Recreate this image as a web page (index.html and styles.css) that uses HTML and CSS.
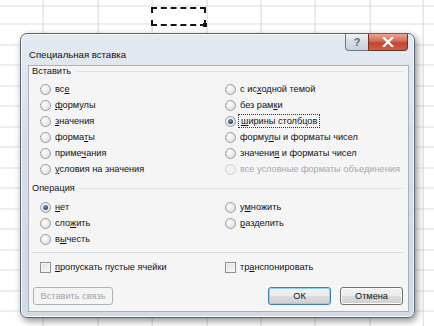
FILE: index.html
```html
<!DOCTYPE html>
<html lang="ru">
<head>
  <meta charset="UTF-8">
  <title>Специальная вставка</title>
  <link rel="stylesheet" href="styles.css">
</head>
<body>
  <div class="sheet">
    <div class="marquee"></div>

    <div class="dialog">
      <div class="titlebar">
        <span class="title">Специальная вставка</span>
        <div class="caption-btns">
          <span class="btn-help">?</span>
          <span class="btn-close">
            <svg width="12" height="10" viewBox="0 0 12 10">
              <path d="M2 1 L10 9 M10 1 L2 9" stroke="#fff" stroke-width="2.4" stroke-linecap="square"/>
            </svg>
          </span>
        </div>
      </div>

      <div class="client">
        <div class="group-label"><span>Вставить</span></div>
        <div class="cols paste">
          <div class="col">
            <label class="opt"><span class="radio"></span><span>вс<u>е</u></span></label>
            <label class="opt"><span class="radio"></span><span><u>ф</u>ормулы</span></label>
            <label class="opt"><span class="radio"></span><span><u>з</u>начения</span></label>
            <label class="opt"><span class="radio"></span><span>форма<u>т</u>ы</span></label>
            <label class="opt"><span class="radio"></span><span>приме<u>ч</u>ания</span></label>
            <label class="opt"><span class="radio"></span><span><u>у</u>словия на значения</span></label>
          </div>
          <div class="col">
            <label class="opt"><span class="radio"></span><span>с ис<u>х</u>одной темой</span></label>
            <label class="opt"><span class="radio"></span><span>без рам<u>к</u>и</span></label>
            <label class="opt"><span class="radio checked"></span><span class="focus"><u>ш</u>ирины столбцов</span></label>
            <label class="opt"><span class="radio"></span><span>форму<u>л</u>ы и форматы чисел</span></label>
            <label class="opt"><span class="radio"></span><span>значени<u>я</u> и форматы чисел</span></label>
            <label class="opt disabled"><span class="radio"></span><span>все условные форматы объединения</span></label>
          </div>
        </div>

        <div class="group-label op-label"><span>Операция</span></div>
        <div class="cols ops">
          <div class="col">
            <label class="opt"><span class="radio checked"></span><span><u>н</u>ет</span></label>
            <label class="opt"><span class="radio"></span><span>сло<u>ж</u>ить</span></label>
            <label class="opt"><span class="radio"></span><span>в<u>ы</u>честь</span></label>
          </div>
          <div class="col">
            <label class="opt"><span class="radio"></span><span>у<u>м</u>ножить</span></label>
            <label class="opt"><span class="radio"></span><span><u>р</u>азделить</span></label>
          </div>
        </div>

        <div class="sep"></div>

        <div class="cols checks">
          <label class="opt"><span class="check"></span><span><u>п</u>ропускать пустые ячейки</span></label>
          <label class="opt"><span class="check"></span><span>тр<u>а</u>нспонировать</span></label>
        </div>

        <div class="actions">
          <button class="btn disabled-btn">Вставить связь</button>
          <span class="spacer"></span>
          <button class="btn default">ОК</button>
          <button class="btn">Отмена</button>
        </div>
      </div>
    </div>
  </div>
</body>
</html>
```

FILE: styles.css
```css
body {
  margin: 0;
  font-family: "Liberation Sans", Arial, sans-serif;
  font-size: 9.2px;
  color: #111;
  background: #fff;
}
.sheet {
  width: 434px;
  height: 326px;
  overflow: hidden;
  background-color: #fff;
  background-image:
    repeating-linear-gradient(90deg, #d6d6d6 0 1px, transparent 1px 54.4px),
    repeating-linear-gradient(0deg, #dcdcdc 0 1px, transparent 1px 20.5px);
  background-position: -11.4px 0, 0 6.5px;
  padding-top: 7px;
  box-sizing: border-box;
}
.marquee {
  position: relative;
  margin-left: 151px;
  width: 55px;
  height: 19px;
  box-sizing: border-box;
  border: 2px dashed #151515;
  background: #fff;
}
.marquee::after {
  content: "";
  position: absolute;
  right: -3px;
  bottom: -3px;
  width: 4px;
  height: 4px;
  background: #151515;
}

/* window */
.dialog {
  margin: 7px 0 0 20px;
  width: 395px;
  height: 285px;
  box-sizing: border-box;
  border: 1px solid #5a6672;
  border-radius: 7px;
  background: linear-gradient(#e4eaf1, #d5dee8 40%, #d2dbe5);
  box-shadow: 2px 3px 7px rgba(0,0,0,0.45), inset 0 0 0 1px #f4f7fa;
  padding: 0 5px 5px 7px;
}
.titlebar {
  height: 31px;
  display: flex;
  justify-content: space-between;
  align-items: flex-start;
}
.title {
  font-size: 9.6px;
  color: #111;
  padding-top: 15px;
  padding-left: 1px;
}
.caption-btns {
  display: flex;
  margin-right: 1px;
}
.btn-help, .btn-close {
  height: 17px;
  box-sizing: border-box;
  display: flex;
  align-items: center;
  justify-content: center;
  border: 1px solid #6c7886;
  border-top: none;
}
.btn-help {
  width: 23px;
  border-radius: 0 0 0 4px;
  border-right: none;
  background: linear-gradient(#eef2f6, #d4dde7 50%, #c6d1dd);
  color: #5a6878;
  font-size: 11px;
  font-weight: bold;
}
.btn-close {
  width: 40px;
  border-color: #6d3328;
  border-radius: 0 0 4px 0;
  background: linear-gradient(#e9a593, #d26a55 45%, #c24632 55%, #cf5f47);
}

.client {
  height: 247px;
  box-sizing: border-box;
  background: #f5f5f5;
  border: 1px solid #a7b2bf;
  padding: 0 5px 6px 3px;
}
.group-label {
  height: 11px;
  line-height: 11px;
  display: flex;
  align-items: center;
}
.group-label::after {
  content: "";
  flex: 1;
  height: 1px;
  margin-left: 4px;
  background: #dcdfe3;
}
.op-label {
  margin-top: 6px;
}
.cols {
  display: grid;
  grid-template-columns: 185px 1fr;
  padding-left: 8px;
}
.paste {
  margin-top: 4px;
}
.ops {
  margin-top: 5px;
}
.col {
  display: flex;
  flex-direction: column;
}
.opt {
  height: 16px;
  display: flex;
  align-items: center;
  gap: 4px;
  white-space: nowrap;
}
.opt u {
  text-decoration-thickness: 1px;
  text-underline-offset: 1px;
}
.disabled {
  color: #a8a8a8;
}
.radio {
  width: 11px;
  height: 11px;
  flex: none;
  box-sizing: border-box;
  border-radius: 50%;
  border: 1px solid #9a9a9a;
  background: radial-gradient(circle at 40% 35%, #ffffff, #e2e2e2 70%, #cfcfcf);
  display: flex;
  align-items: center;
  justify-content: center;
}
.disabled .radio {
  border-color: #d0d0d0;
  background: #f2f2f2;
}
.radio.checked::after {
  content: "";
  width: 5px;
  height: 5px;
  border-radius: 50%;
  background: radial-gradient(circle at 40% 35%, #6e9ccc, #1d3e66 80%);
}
.focus {
  outline: 1px dotted #333;
  outline-offset: 1px;
  padding: 0 1px;
}
.sep {
  height: 1px;
  margin: 5px 0 0 0;
  background: #d8dce1;
}
.checks {
  margin-top: 6px;
}
.check {
  width: 11px;
  height: 11px;
  flex: none;
  box-sizing: border-box;
  border: 1px solid #8e8f8f;
  background: linear-gradient(135deg, #e0e0e0, #f8f8f8);
  box-shadow: inset 0 0 0 1px #f4f4f4;
}
.actions {
  display: flex;
  gap: 9px;
  margin-top: 12px;
  padding-left: 1px;
}
.spacer {
  flex: 1;
}
.btn {
  width: 63px;
  height: 18px;
  padding: 0;
  font-family: inherit;
  font-size: 9.2px;
  color: #111;
  border: 1px solid #707070;
  border-radius: 3px;
  background: linear-gradient(#f3f3f3, #ebebeb 50%, #dddddd 51%, #cfcfcf);
  box-shadow: inset 0 0 0 1px #fbfbfb;
}
.btn.default {
  border-color: #3c7fb1;
  box-shadow: inset 0 0 0 1px #8fd3f3;
}
.btn.disabled-btn {
  width: 80px;
  color: #a3a3a3;
  border-color: #adb2b5;
  background: #f4f4f4;
  box-shadow: none;
}
```
